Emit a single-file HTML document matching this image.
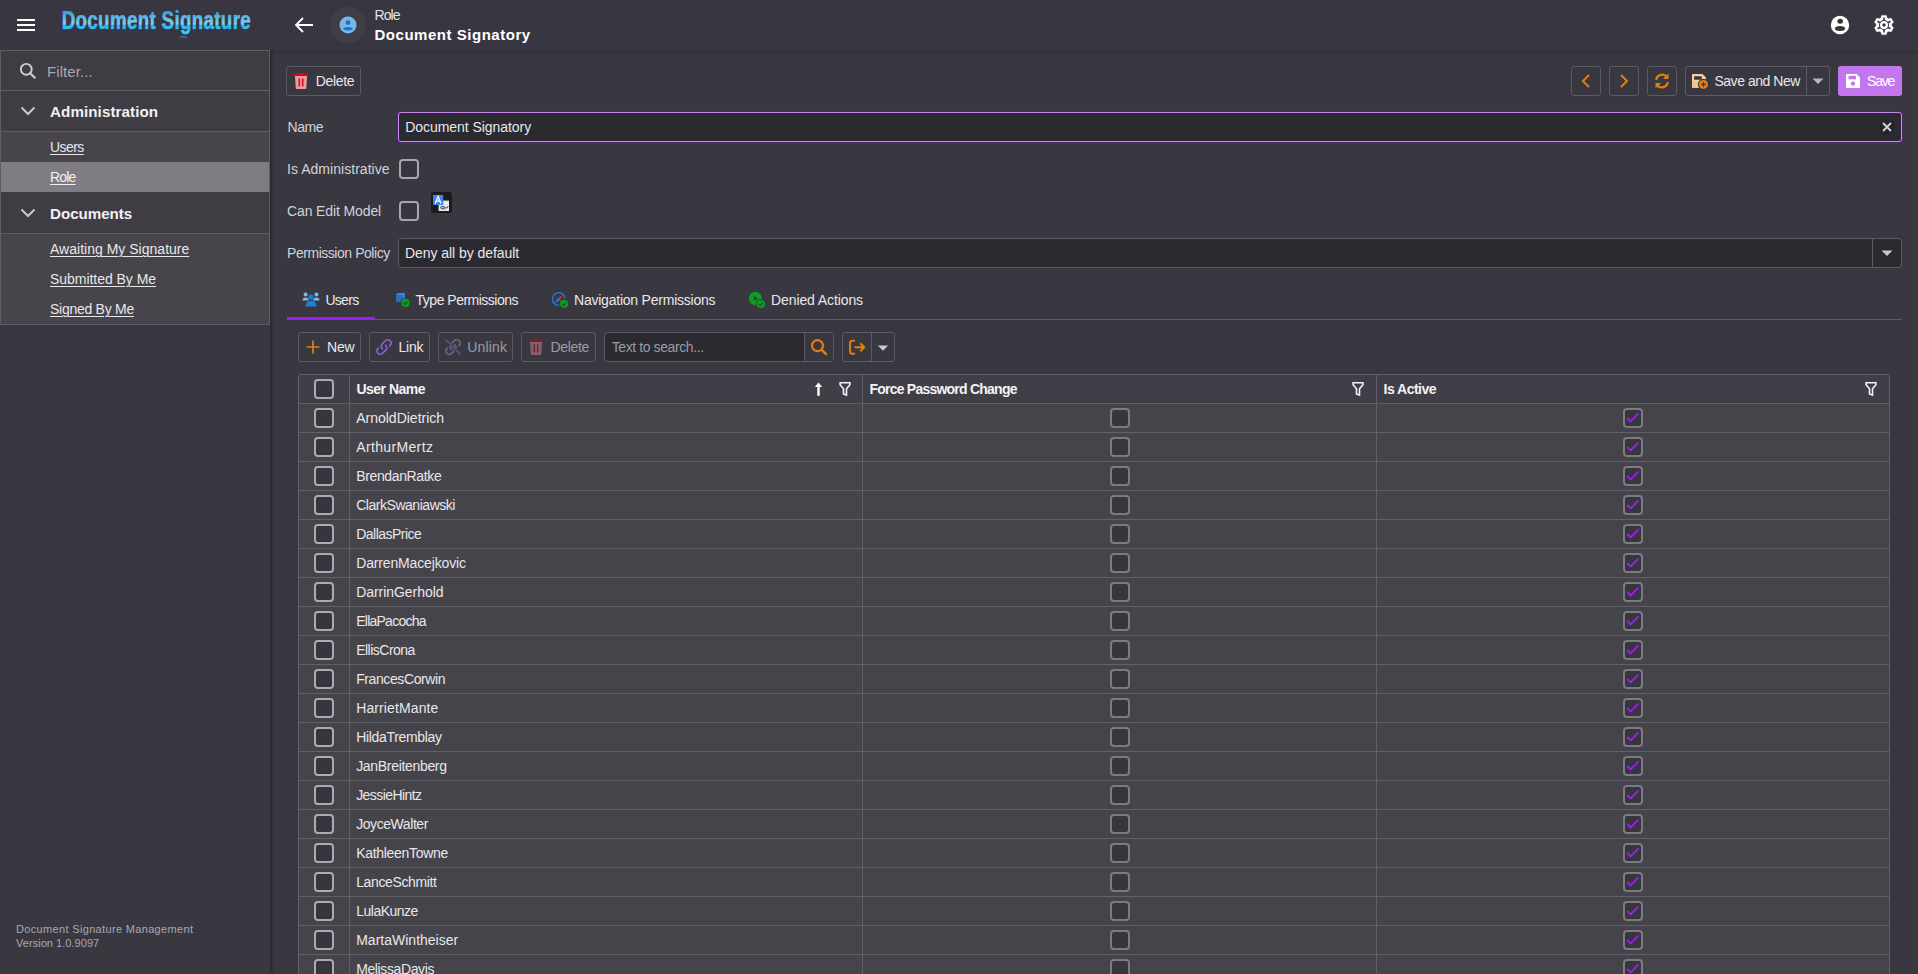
<!DOCTYPE html>
<html><head><meta charset="utf-8"><style>
*{box-sizing:border-box;margin:0;padding:0}
html,body{width:1918px;height:974px;overflow:hidden}
body{background:#393841;font-family:"Liberation Sans",sans-serif;color:#e8e7ea;font-size:14px;position:relative}
.a{position:absolute}
.t{position:absolute;white-space:nowrap;line-height:1}
.u{text-decoration:underline;text-underline-offset:1.5px;text-decoration-thickness:1px}
</style></head><body>
<div class="a" style="left:0px;top:50px;width:270px;height:924px;background:#393841;box-shadow:2px 0 3px rgba(0,0,0,.3)"></div>
<div class="a" style="left:0px;top:0px;width:1918px;height:50px;background:#383741;"></div>
<div class="a" style="left:270px;top:50px;width:1648px;height:4px;background:linear-gradient(rgba(20,20,20,.16),rgba(20,20,20,.10) 60%,rgba(20,20,20,0));"></div>
<div class="a" style="left:17px;top:19px;width:18px;height:2px;background:#ffffff;"></div>
<div class="a" style="left:17px;top:24px;width:18px;height:2px;background:#ffffff;"></div>
<div class="a" style="left:17px;top:29px;width:18px;height:2px;background:#ffffff;"></div>
<svg class="a" style="left:55px;top:0px" width="210" height="45" viewBox="0 0 210 45"><defs><linearGradient id="lg" x1="0" y1="10" x2="0" y2="34" gradientUnits="userSpaceOnUse"><stop offset="0" stop-color="#3499cc"/><stop offset="0.25" stop-color="#55b2dc"/><stop offset="0.6" stop-color="#8ad2ee"/><stop offset="0.61" stop-color="#2ab4ee"/><stop offset="1" stop-color="#3ccaff"/></linearGradient><linearGradient id="rg" x1="0" y1="35" x2="0" y2="39.5" gradientUnits="userSpaceOnUse"><stop offset="0" stop-color="#4f8aa6"/><stop offset="1" stop-color="#37363f"/></linearGradient></defs><g transform="translate(6.7 0) scale(0.72 1)"><text x="0" y="29.1" font-family="Liberation Sans" font-weight="700" font-size="26" textLength="262.5" lengthAdjust="spacing" fill="none" stroke="#231c24" stroke-opacity="0.55" stroke-width="2.2" stroke-linejoin="round">Document Signature</text><text x="0" y="29.1" font-family="Liberation Sans" font-weight="700" font-size="26" textLength="262.5" lengthAdjust="spacing" fill="url(#lg)" stroke="url(#lg)" stroke-width="0.7" stroke-linejoin="round">Document Signature</text></g><path d="M123.8 39.2 C124.4 34.6 132.6 34.6 133.2 39.2 L130.6 39.2 C130 37.2 127 37.2 126.4 39.2 Z" fill="url(#rg)"/></svg>
<svg class="a" style="left:294px;top:16px" width="20" height="18" viewBox="0 0 20 18"><path d="M2 9 H19 M9 2 L2 9 L9 16" stroke="#fff" stroke-width="1.8" fill="none" stroke-linejoin="miter"/></svg>
<div class="a" style="left:330px;top:7px;width:36px;height:36px;background:#403f48;border-radius:50%"></div>
<svg class="a" style="left:339px;top:16px" width="18" height="18" viewBox="0 0 18 18"><circle cx="9" cy="9" r="8.5" fill="#7ab6e6"/><circle cx="9" cy="6.6" r="2.4" fill="#1a73d0"/><path d="M4.2 12.2 Q9 9.6 13.8 12.2 Q13.8 14.4 9 14.4 Q4.2 14.4 4.2 12.2Z" fill="#1a73d0"/></svg>
<div class="t" style="left:374.5px;top:8.15px;font-size:14px;color:#e6e5e8;letter-spacing:-0.899px;">Role</div>
<div class="t" style="left:374.5px;top:27.30px;font-size:15px;color:#ffffff;font-weight:700;letter-spacing:0.524px;">Document Signatory</div>
<svg class="a" style="left:1830px;top:15px" width="20" height="20" viewBox="0 0 20 20"><circle cx="10" cy="10" r="9.2" fill="#fff"/><ellipse cx="10.2" cy="6.3" rx="2.8" ry="2.5" fill="#36353e"/><ellipse cx="10" cy="13.6" rx="5.1" ry="2.5" fill="#36353e"/></svg>
<svg class="a" style="left:1872px;top:13px" width="24" height="24" viewBox="0 0 24 24"><g transform="translate(12 12)"><path fill="#fff" stroke="#fff" stroke-width="0.4" stroke-linejoin="round" d="M-3.85 -6.67 L-2.92 -7.23 L-2.40 -9.61 L2.40 -9.61 L2.92 -7.23 L3.85 -6.67 L4.80 -6.15 L7.12 -6.88 L9.52 -2.73 L7.72 -1.09 L7.70 0.00 L7.72 1.09 L9.52 2.73 L7.12 6.88 L4.80 6.15 L3.85 6.67 L2.92 7.23 L2.40 9.61 L-2.40 9.61 L-2.92 7.23 L-3.85 6.67 L-4.80 6.15 L-7.12 6.88 L-9.52 2.73 L-7.72 1.09 L-7.70 -0.00 L-7.72 -1.09 L-9.52 -2.73 L-7.12 -6.88 L-4.80 -6.15Z"/><circle r="5.0" fill="#36353e"/><circle r="2.85" fill="none" stroke="#fff" stroke-width="2.3"/><g stroke="#36353e" stroke-width="1.6"><line x1="0.00" y1="-4.60" x2="0.00" y2="-7.50"/><line x1="3.98" y1="-2.30" x2="6.50" y2="-3.75"/><line x1="3.98" y1="2.30" x2="6.50" y2="3.75"/><line x1="0.00" y1="4.60" x2="0.00" y2="7.50"/><line x1="-3.98" y1="2.30" x2="-6.50" y2="3.75"/><line x1="-3.98" y1="-2.30" x2="-6.50" y2="-3.75"/></g></g></svg>
<div class="a" style="left:0px;top:50px;width:270px;height:275px;background:#3f3c44;border:1px solid #5f5d65"></div>
<div class="a" style="left:1px;top:91px;width:268px;height:40px;background:#3f3c44;"></div>
<div class="a" style="left:1px;top:131px;width:268px;height:1px;background:#5f5d65;"></div>
<div class="a" style="left:1px;top:90px;width:268px;height:1px;background:#5f5d65;"></div>
<div class="a" style="left:1px;top:132px;width:268px;height:30px;background:#47444b;"></div>
<div class="a" style="left:1px;top:162px;width:268px;height:30px;background:#7f7d83;"></div>
<div class="a" style="left:1px;top:192px;width:268px;height:41px;background:#3f3c44;"></div>
<div class="a" style="left:1px;top:233px;width:268px;height:1px;background:#5f5d65;"></div>
<div class="a" style="left:1px;top:234px;width:268px;height:90px;background:#47444b;"></div>
<svg class="a" style="left:19px;top:62px" width="18" height="18" viewBox="0 0 18 18"><circle cx="7.3" cy="7.3" r="5.4" stroke="#cfced2" stroke-width="1.9" fill="none"/><path d="M11.2 11.2 L15.8 15.8" stroke="#cfced2" stroke-width="2.1" stroke-linecap="round"/></svg>
<div class="t" style="left:47px;top:64.30px;font-size:15px;color:#a9a8ad;letter-spacing:0.073px;">Filter...</div>
<svg class="a" style="left:20px;top:106px" width="16" height="10" viewBox="0 0 16 10"><path d="M1.5 1.5 L8 8 L14.5 1.5" stroke="#c9c8cc" stroke-width="2" fill="none"/></svg>
<svg class="a" style="left:20px;top:208px" width="16" height="10" viewBox="0 0 16 10"><path d="M1.5 1.5 L8 8 L14.5 1.5" stroke="#c9c8cc" stroke-width="2" fill="none"/></svg>
<div class="t" style="left:50px;top:103.63px;font-size:15.2px;color:#f2f1f4;font-weight:700;letter-spacing:0.071px;">Administration</div>
<div class="t" style="left:50px;top:205.93px;font-size:15.2px;color:#f2f1f4;font-weight:700;letter-spacing:-0.05px;">Documents</div>
<div class="t" style="left:50px;top:140.45px;font-size:14px;color:#e8e7ea;letter-spacing:-0.566px;"><span class="u">Users</span></div>
<div class="t" style="left:50px;top:170.05px;font-size:14px;color:#f2f1f4;letter-spacing:-0.799px;"><span class="u">Role</span></div>
<div class="t" style="left:50px;top:242.15px;font-size:14px;color:#e8e7ea;letter-spacing:0.013px;"><span class="u">Awaiting My Signature</span></div>
<div class="t" style="left:50px;top:272.15px;font-size:14px;color:#e8e7ea;letter-spacing:-0.036px;"><span class="u">Submitted By Me</span></div>
<div class="t" style="left:50px;top:302.15px;font-size:14px;color:#e8e7ea;letter-spacing:-0.27px;"><span class="u">Signed By Me</span></div>
<div class="t" style="left:16px;top:923.69px;font-size:11px;color:#a9a8ad;letter-spacing:0.338px;">Document Signature Management</div>
<div class="t" style="left:16px;top:937.69px;font-size:11px;color:#a9a8ad;letter-spacing:0.041px;">Version 1.0.9097</div>
<div class="a" style="left:286px;top:66px;width:75px;height:30px;background:none;border:1px solid #5c5a62;border-radius:3px;"></div>
<svg class="a" style="left:288px;top:68px" width="24" height="24" viewBox="0 0 24 24"><rect x="5.9" y="5.8" width="14.1" height="2.1" fill="#d90a1a"/><rect x="10.1" y="4.9" width="5.9" height="1.5" rx="0.6" fill="#d90a1a"/><path d="M7 7.9 H19.1 L18.3 20.2 Q18.2 20.9 17.5 20.9 H8.6 Q7.9 20.9 7.8 20.2 Z" fill="#eb9aa2"/><path d="M11.3 11 V17.7 M14.7 11 V17.7" stroke="#d01020" stroke-width="1.6" stroke-linecap="round"/></svg>
<div class="t" style="left:315.7px;top:74.15px;font-size:14px;color:#e8e7ea;letter-spacing:-0.314px;">Delete</div>
<div class="a" style="left:1571px;top:66px;width:30px;height:30px;background:none;border:1px solid #5c5a62;border-radius:3px;"></div>
<svg class="a" style="left:1579px;top:73px" width="14" height="16" viewBox="0 0 14 16"><path d="M10 2 L4 8 L10 14" stroke="#df7f0e" stroke-width="2" fill="none"/></svg>
<div class="a" style="left:1609px;top:66px;width:30px;height:30px;background:none;border:1px solid #5c5a62;border-radius:3px;"></div>
<svg class="a" style="left:1617px;top:73px" width="14" height="16" viewBox="0 0 14 16"><path d="M4 2 L10 8 L4 14" stroke="#df7f0e" stroke-width="2" fill="none"/></svg>
<div class="a" style="left:1647px;top:66px;width:30px;height:30px;background:none;border:1px solid #5c5a62;border-radius:3px;"></div>
<svg class="a" style="left:1653px;top:72px" width="18" height="18" viewBox="0 0 18 18"><g fill="none" stroke="#df7f0e" stroke-width="2.2"><path d="M3.2 8 A6 6 0 0 1 14 5.2"/><path d="M14.8 10 A6 6 0 0 1 4 12.8"/></g><path d="M15.5 1.5 V7 H10 Z" fill="#df7f0e"/><path d="M2.5 16.5 V11 H8 Z" fill="#df7f0e"/></svg>
<div class="a" style="left:1685px;top:66px;width:145px;height:30px;background:none;border:1px solid #5c5a62;border-radius:3px;"></div>
<div class="a" style="left:1806px;top:67px;width:1px;height:28px;background:#5c5a62;"></div>
<svg class="a" style="left:1686px;top:68px" width="30" height="26" viewBox="0 0 30 26"><path d="M6 7 Q6 6 7 6 H16.5 L20 9.5 V19 Q20 20 19 20 H7 Q6 20 6 19 Z" fill="#fcd09a"/><path d="M6 13 H20 V19 Q20 20 19 20 H7 Q6 20 6 19 Z" fill="#f0c48c"/><rect x="8.1" y="8.3" width="7.6" height="3.4" fill="#37363f"/><circle cx="17.5" cy="16.4" r="5.6" fill="#37363f"/><circle cx="17.5" cy="16.4" r="4.5" fill="#e8820f"/><path d="M15 16.4 H20 M17.5 13.9 V18.9" stroke="#37363f" stroke-width="1.2"/></svg>
<div class="t" style="left:1714.4px;top:74.15px;font-size:14px;color:#e8e7ea;letter-spacing:-0.46px;">Save and New</div>
<svg class="a" style="left:1812px;top:78px" width="12" height="7" viewBox="0 0 12 7"><path d="M0.5 0.5 H11.5 L6 6 Z" fill="#b9b8bd"/></svg>
<div class="a" style="left:1838px;top:66px;width:64px;height:30px;background:#c377ee;border-radius:3px"></div>
<svg class="a" style="left:1845px;top:73px" width="16" height="16" viewBox="0 0 16 16"><path d="M1 2 Q1 1 2 1 H11.5 L15 4.5 V14 Q15 15 14 15 H2 Q1 15 1 14 Z" fill="#fff"/><rect x="3.5" y="2.8" width="7.5" height="3.5" fill="#c377ee"/><circle cx="8" cy="10.6" r="2.2" fill="#c377ee"/></svg>
<div class="t" style="left:1867px;top:74.05px;font-size:14px;color:#ffffff;letter-spacing:-1.207px;">Save</div>
<div class="t" style="left:287.5px;top:120.45px;font-size:14px;color:#d2d1d6;letter-spacing:-0.453px;">Name</div>
<div class="a" style="left:398px;top:112px;width:1504px;height:30px;background:#2b2a31;border:1.6px solid #cd88f0;border-radius:3px;box-shadow:0 0.4px 0 1.4px #4d2a69"></div>
<div class="t" style="left:405.3px;top:120.45px;font-size:14px;color:#e8e7ea;letter-spacing:-0.056px;">Document Signatory</div>
<div class="a" style="left:1879px;top:119px;width:16px;height:16px;background:#25242a;border-radius:50%"></div>
<svg class="a" style="left:1882px;top:122px" width="10" height="10" viewBox="0 0 10 10"><path d="M1 1 L9 9 M9 1 L1 9" stroke="#d4d3d7" stroke-width="1.8"/></svg>
<div class="t" style="left:287px;top:162.15px;font-size:14px;color:#d2d1d6;letter-spacing:0.041px;">Is Administrative</div>
<div class="a" style="left:399px;top:159px;width:20px;height:20px;background:#37353e;border:2px solid #a9a7ad;border-radius:4px"></div>
<div class="t" style="left:287px;top:204.15px;font-size:14px;color:#d2d1d6;letter-spacing:-0.117px;">Can Edit Model</div>
<div class="a" style="left:399px;top:201px;width:20px;height:20px;background:#37353e;border:2px solid #a9a7ad;border-radius:4px"></div>
<div class="a" style="left:430.5px;top:192.3px;width:21px;height:21px;background:#1b1b1d;border-radius:3px"></div>
<svg class="a" style="left:430px;top:192px" width="22" height="22" viewBox="0 0 22 22"><rect x="8.6" y="8.6" width="10.4" height="10.4" fill="#e6eaea"/><path d="M10.3 15.8 q2 -2.6 4 -0.6 q2 2 4 -1.2 M11 17.2 q1.8 -1.6 3.6 0.2" stroke="#3f6874" stroke-width="1.1" fill="none"/><rect x="3" y="2.9" width="10.2" height="10.1" fill="#3f82f2"/><path d="M5.2 11.6 L8.1 4.4 L11 11.6 M6.3 9.2 H9.9" stroke="#fff" stroke-width="1.3" fill="none"/></svg>
<div class="t" style="left:287px;top:245.95px;font-size:14px;color:#d2d1d6;letter-spacing:-0.455px;">Permission Policy</div>
<div class="a" style="left:398px;top:238px;width:1504px;height:30px;background:#2b2a31;border:1px solid #5c5a62;border-radius:4px"></div>
<div class="a" style="left:1872px;top:239px;width:1px;height:28px;background:#5c5a62;"></div>
<svg class="a" style="left:1881px;top:250px" width="12" height="7" viewBox="0 0 12 7"><path d="M0.5 0.5 H11.5 L6 6 Z" fill="#c9c8cc"/></svg>
<div class="t" style="left:405px;top:245.75px;font-size:14px;color:#e8e7ea;letter-spacing:-0.055px;">Deny all by default</div>
<div class="a" style="left:287px;top:319px;width:1615px;height:1px;background:#5f5d65;"></div>
<div class="a" style="left:287px;top:317px;width:88px;height:3px;background:#a21cf0;"></div>
<svg class="a" style="left:302px;top:292px" width="18" height="15" viewBox="0 0 18 15"><circle cx="3.6" cy="2.6" r="2" fill="#7fb8ea"/><circle cx="14.4" cy="2.6" r="2" fill="#7fb8ea"/><path d="M0.5 8.5 Q0.5 5.6 3.6 5.6 Q6.7 5.6 6.7 8.5 Z M11.3 8.5 Q11.3 5.6 14.4 5.6 Q17.5 5.6 17.5 8.5 Z" fill="#7fb8ea"/><circle cx="9" cy="5" r="2.6" fill="#1a80d8"/><path d="M3.5 14.5 Q3.5 8.8 9 8.8 Q14.5 8.8 14.5 14.5 Z" fill="#1a80d8"/></svg>
<div class="t" style="left:325.4px;top:293.25px;font-size:14px;color:#e8e7ea;letter-spacing:-0.691px;">Users</div>
<svg class="a" style="left:394.5px;top:292px" width="16" height="16" viewBox="0 0 16 16"><path d="M1 3 L3 1 H10 V8 L8 10 H1 Z" fill="#2a6cc8"/><path d="M3 1 H10 L8 3 H1 Z" fill="#3f86e0"/><path d="M10 1 V8 L8 10 V3 Z" fill="#1a8cf0"/><circle cx="10.5" cy="10.9" r="5" fill="#393841"/><circle cx="10.5" cy="10.9" r="4.1" fill="#07a020"/><path d="M8.6 11 L10 12.4 L12.6 9.6" stroke="#22452a" stroke-width="1.2" fill="none"/></svg>
<div class="t" style="left:415.6px;top:293.25px;font-size:14px;color:#e8e7ea;letter-spacing:-0.506px;">Type Permissions</div>
<svg class="a" style="left:551px;top:292px" width="17" height="17" viewBox="0 0 17 17"><circle cx="7.7" cy="7" r="6.3" fill="none" stroke="#1a80e0" stroke-width="1.3"/><path d="M12.1 2.9 L9.02 8.14 L6.78 5.86 Z" fill="#e82020"/><path d="M3.6 11.1 L9.02 8.14 L6.78 5.86 Z" fill="#1a80e0"/><circle cx="13.1" cy="11.8" r="5" fill="#393841"/><circle cx="13.1" cy="11.8" r="4.1" fill="#07a020"/><path d="M11.2 12 L12.6 13.4 L15.2 10.6" stroke="#22452a" stroke-width="1.2" fill="none"/></svg>
<div class="t" style="left:574px;top:293.25px;font-size:14px;color:#e8e7ea;letter-spacing:-0.224px;">Navigation Permissions</div>
<svg class="a" style="left:745px;top:288px" width="24" height="24" viewBox="0 0 24 24"><circle cx="10.4" cy="10.4" r="6.55" fill="#07a020"/><path d="M9 8.1 L12.9 10.4 L9 12.6 Z" fill="#37353e"/><circle cx="16" cy="16" r="5" fill="#393841"/><circle cx="16" cy="16" r="4.1" fill="#07a020"/><path d="M14.1 16.1 L15.5 17.5 L18.1 14.6" stroke="#22452a" stroke-width="1.2" fill="none"/></svg>
<div class="t" style="left:771px;top:293.25px;font-size:14px;color:#e8e7ea;letter-spacing:-0.1px;">Denied Actions</div>
<div class="a" style="left:298px;top:332px;width:63px;height:30px;background:none;border:1px solid #5c5a62;border-radius:3px;"></div>
<svg class="a" style="left:306px;top:340px" width="14" height="14" viewBox="0 0 14 14"><path d="M7 0.5 V13.5 M0.5 7 H13.5" stroke="#df7f0e" stroke-width="1.7"/></svg>
<div class="t" style="left:327px;top:340.15px;font-size:14px;color:#e8e7ea;letter-spacing:-0.208px;">New</div>
<div class="a" style="left:369px;top:332px;width:61px;height:30px;background:none;border:1px solid #5c5a62;border-radius:3px;"></div>
<svg class="a" style="left:372px;top:335px" width="24" height="24" viewBox="0 0 24 24"><g fill="none" stroke="#8a5fcf" stroke-width="1.7" stroke-linecap="round"><path d="M10.23 13.67 A3.35 3.35 0 0 1 10.23 8.93 L13.43 5.73 A3.35 3.35 0 0 1 18.17 10.47 L17.67 10.97"/><path d="M13.77 10.33 A3.35 3.35 0 0 1 13.77 15.07 L10.57 18.27 A3.35 3.35 0 0 1 5.83 13.53 L6.33 13.03"/></g></svg>
<div class="t" style="left:398.5px;top:340.15px;font-size:14px;color:#e8e7ea;letter-spacing:-0.196px;">Link</div>
<div class="a" style="left:438px;top:332px;width:75px;height:30px;background:none;border:1px solid #5c5a62;border-radius:3px;"></div>
<svg class="a" style="left:441px;top:335px" width="24" height="24" viewBox="0 0 24 24"><g fill="none" stroke="#706481" stroke-width="1.7" stroke-linecap="round"><path d="M11.3 7.8 L13.43 5.73 A3.35 3.35 0 0 1 18.17 10.47 L17.67 10.97"/><path d="M13.5 9.6 L15.2 12.2"/><path d="M12.7 16.2 L10.57 18.27 A3.35 3.35 0 0 1 5.83 13.53 L6.33 13.03"/><path d="M8.8 11.8 L10.5 14.4"/></g><path d="M5 4.8 L19.2 19" stroke="#5c4a88" stroke-width="1.8" stroke-linecap="round"/></svg>
<div class="t" style="left:467.3px;top:340.15px;font-size:14px;color:#9c9ba1;letter-spacing:0.139px;">Unlink</div>
<div class="a" style="left:521px;top:332px;width:75px;height:30px;background:none;border:1px solid #5c5a62;border-radius:3px;"></div>
<svg class="a" style="left:523px;top:334px" width="24" height="24" viewBox="0 0 24 24"><rect x="5.9" y="5.8" width="14.1" height="2.1" fill="#7a2232"/><rect x="10.1" y="4.9" width="5.9" height="1.5" rx="0.6" fill="#7a2232"/><path d="M7 7.9 H19.1 L18.3 20.2 Q18.2 20.9 17.5 20.9 H8.6 Q7.9 20.9 7.8 20.2 Z" fill="#85606a"/><path d="M11.3 11 V17.7 M14.7 11 V17.7" stroke="#7a2232" stroke-width="1.6" stroke-linecap="round"/></svg>
<div class="t" style="left:550.4px;top:340.15px;font-size:14px;color:#9c9ba1;letter-spacing:-0.294px;">Delete</div>
<div class="a" style="left:604px;top:332px;width:230px;height:30px;background:#2b2a31;border:1px solid #5c5a62;border-radius:4px"></div>
<div class="a" style="left:804px;top:333px;width:29px;height:28px;background:#393841;border-left:1px solid #5c5a62;border-radius:0 3px 3px 0"></div>
<svg class="a" style="left:810px;top:339px" width="18" height="18" viewBox="0 0 18 18"><circle cx="7.5" cy="6.6" r="5.5" fill="none" stroke="#df7f0e" stroke-width="2.2"/><path d="M11.6 10.7 L16 15.2" stroke="#df7f0e" stroke-width="2.4" stroke-linecap="round"/></svg>
<div class="t" style="left:611.7px;top:340.15px;font-size:14px;color:#9c9ba1;letter-spacing:-0.402px;">Text to search...</div>
<div class="a" style="left:842px;top:332px;width:53px;height:30px;background:none;border:1px solid #5c5a62;border-radius:3px;"></div>
<div class="a" style="left:871px;top:333px;width:1px;height:28px;background:#5c5a62;"></div>
<svg class="a" style="left:840px;top:330px" width="30" height="30" viewBox="0 0 30 30"><path d="M15 10.8 H12.6 Q10.1 10.8 10.1 13.2 V21.4 Q10.1 23.8 12.6 23.8 H15" stroke="#df7f0e" stroke-width="2" fill="none"/><path d="M14.5 17.2 H24.2 M20.3 13.2 L24.2 17.2 L20.3 21.2" stroke="#df7f0e" stroke-width="2" fill="none"/></svg>
<svg class="a" style="left:877px;top:345px" width="12" height="7" viewBox="0 0 12 7"><path d="M0.8 0.5 H11.2 L6 5.8 Z" fill="#c9c8cc"/></svg>
<div class="a" style="left:298px;top:374px;width:1592px;height:600px;background:#46444b;border:1px solid #615f67;border-bottom:none;border-radius:3px 3px 0 0"></div>
<div class="a" style="left:299px;top:375px;width:1590px;height:28px;background:#403e46;"></div>
<div class="a" style="left:349px;top:375px;width:1px;height:599px;background:#615f67;"></div>
<div class="a" style="left:862px;top:375px;width:1px;height:599px;background:#615f67;"></div>
<div class="a" style="left:1376px;top:375px;width:1px;height:599px;background:#615f67;"></div>
<div class="a" style="left:314px;top:379px;width:20px;height:20px;background:#37353e;border:2px solid #adabb1;border-radius:4px"></div>
<div class="t" style="left:356.4px;top:382.15px;font-size:14px;color:#f4f3f6;font-weight:700;letter-spacing:-0.507px;">User Name</div>
<div class="t" style="left:869.4px;top:382.15px;font-size:14px;color:#f4f3f6;font-weight:700;letter-spacing:-0.765px;">Force Password Change</div>
<div class="t" style="left:1383.5px;top:382.15px;font-size:14px;color:#f4f3f6;font-weight:700;letter-spacing:-0.497px;">Is Active</div>
<svg class="a" style="left:838px;top:381px" width="14" height="16" viewBox="0 0 14 16"><path d="M2.1 1.7 H11.9 V3.8 L8.5 7.8 V14.0 L5.5 12.9 V7.8 L2.1 3.8 Z" stroke="#f2f1f4" stroke-width="1.6" fill="none" stroke-linejoin="miter"/></svg>
<svg class="a" style="left:1351px;top:381px" width="14" height="16" viewBox="0 0 14 16"><path d="M2.1 1.7 H11.9 V3.8 L8.5 7.8 V14.0 L5.5 12.9 V7.8 L2.1 3.8 Z" stroke="#f2f1f4" stroke-width="1.6" fill="none" stroke-linejoin="miter"/></svg>
<svg class="a" style="left:1864px;top:381px" width="14" height="16" viewBox="0 0 14 16"><path d="M2.1 1.7 H11.9 V3.8 L8.5 7.8 V14.0 L5.5 12.9 V7.8 L2.1 3.8 Z" stroke="#f2f1f4" stroke-width="1.6" fill="none" stroke-linejoin="miter"/></svg>
<svg class="a" style="left:806px;top:376px" width="24" height="24" viewBox="0 0 24 24"><path d="M8.8 11 L12.5 6.4 L16.2 11 Z" fill="#fff"/><rect x="11.3" y="10.5" width="2.4" height="9.3" fill="#fff"/></svg>
<div class="a" style="left:299px;top:403px;width:1590px;height:1px;background:#615f67;"></div>
<div class="a" style="left:314px;top:408px;width:20px;height:20px;background:#37353e;border:2px solid #adabb1;border-radius:4px"></div>
<div class="t" style="left:356.2px;top:411.15px;font-size:14px;color:#e8e7ea;letter-spacing:-0.003px;">ArnoldDietrich</div>
<div class="a" style="left:1110px;top:408px;width:20px;height:20px;background:#37353e;border:2px solid #7d7b82;border-radius:4px"></div>
<div class="a" style="left:1623px;top:408px;width:20px;height:20px;background:#37353e;border:2px solid #7d7b82;border-radius:4px"></div>
<svg class="a" style="left:1623px;top:408px" width="20" height="20" viewBox="0 0 20 20"><path d="M4.2 10 L7.6 13.4 L15.6 5.4" stroke="#a21cf0" stroke-width="1.8" fill="none"/></svg>
<div class="a" style="left:299px;top:432px;width:1590px;height:1px;background:#615f67;"></div>
<div class="a" style="left:314px;top:437px;width:20px;height:20px;background:#37353e;border:2px solid #adabb1;border-radius:4px"></div>
<div class="t" style="left:356.2px;top:440.15px;font-size:14px;color:#e8e7ea;letter-spacing:0.357px;">ArthurMertz</div>
<div class="a" style="left:1110px;top:437px;width:20px;height:20px;background:#37353e;border:2px solid #7d7b82;border-radius:4px"></div>
<div class="a" style="left:1623px;top:437px;width:20px;height:20px;background:#37353e;border:2px solid #7d7b82;border-radius:4px"></div>
<svg class="a" style="left:1623px;top:437px" width="20" height="20" viewBox="0 0 20 20"><path d="M4.2 10 L7.6 13.4 L15.6 5.4" stroke="#a21cf0" stroke-width="1.8" fill="none"/></svg>
<div class="a" style="left:299px;top:461px;width:1590px;height:1px;background:#615f67;"></div>
<div class="a" style="left:314px;top:466px;width:20px;height:20px;background:#37353e;border:2px solid #adabb1;border-radius:4px"></div>
<div class="t" style="left:356.2px;top:469.15px;font-size:14px;color:#e8e7ea;letter-spacing:-0.365px;">BrendanRatke</div>
<div class="a" style="left:1110px;top:466px;width:20px;height:20px;background:#37353e;border:2px solid #7d7b82;border-radius:4px"></div>
<div class="a" style="left:1623px;top:466px;width:20px;height:20px;background:#37353e;border:2px solid #7d7b82;border-radius:4px"></div>
<svg class="a" style="left:1623px;top:466px" width="20" height="20" viewBox="0 0 20 20"><path d="M4.2 10 L7.6 13.4 L15.6 5.4" stroke="#a21cf0" stroke-width="1.8" fill="none"/></svg>
<div class="a" style="left:299px;top:490px;width:1590px;height:1px;background:#615f67;"></div>
<div class="a" style="left:314px;top:495px;width:20px;height:20px;background:#37353e;border:2px solid #adabb1;border-radius:4px"></div>
<div class="t" style="left:356.2px;top:498.15px;font-size:14px;color:#e8e7ea;letter-spacing:-0.465px;">ClarkSwaniawski</div>
<div class="a" style="left:1110px;top:495px;width:20px;height:20px;background:#37353e;border:2px solid #7d7b82;border-radius:4px"></div>
<div class="a" style="left:1623px;top:495px;width:20px;height:20px;background:#37353e;border:2px solid #7d7b82;border-radius:4px"></div>
<svg class="a" style="left:1623px;top:495px" width="20" height="20" viewBox="0 0 20 20"><path d="M4.2 10 L7.6 13.4 L15.6 5.4" stroke="#a21cf0" stroke-width="1.8" fill="none"/></svg>
<div class="a" style="left:299px;top:519px;width:1590px;height:1px;background:#615f67;"></div>
<div class="a" style="left:314px;top:524px;width:20px;height:20px;background:#37353e;border:2px solid #adabb1;border-radius:4px"></div>
<div class="t" style="left:356.2px;top:527.15px;font-size:14px;color:#e8e7ea;letter-spacing:-0.521px;">DallasPrice</div>
<div class="a" style="left:1110px;top:524px;width:20px;height:20px;background:#37353e;border:2px solid #7d7b82;border-radius:4px"></div>
<div class="a" style="left:1623px;top:524px;width:20px;height:20px;background:#37353e;border:2px solid #7d7b82;border-radius:4px"></div>
<svg class="a" style="left:1623px;top:524px" width="20" height="20" viewBox="0 0 20 20"><path d="M4.2 10 L7.6 13.4 L15.6 5.4" stroke="#a21cf0" stroke-width="1.8" fill="none"/></svg>
<div class="a" style="left:299px;top:548px;width:1590px;height:1px;background:#615f67;"></div>
<div class="a" style="left:314px;top:553px;width:20px;height:20px;background:#37353e;border:2px solid #adabb1;border-radius:4px"></div>
<div class="t" style="left:356.2px;top:556.15px;font-size:14px;color:#e8e7ea;letter-spacing:-0.15px;">DarrenMacejkovic</div>
<div class="a" style="left:1110px;top:553px;width:20px;height:20px;background:#37353e;border:2px solid #7d7b82;border-radius:4px"></div>
<div class="a" style="left:1623px;top:553px;width:20px;height:20px;background:#37353e;border:2px solid #7d7b82;border-radius:4px"></div>
<svg class="a" style="left:1623px;top:553px" width="20" height="20" viewBox="0 0 20 20"><path d="M4.2 10 L7.6 13.4 L15.6 5.4" stroke="#a21cf0" stroke-width="1.8" fill="none"/></svg>
<div class="a" style="left:299px;top:577px;width:1590px;height:1px;background:#615f67;"></div>
<div class="a" style="left:314px;top:582px;width:20px;height:20px;background:#37353e;border:2px solid #adabb1;border-radius:4px"></div>
<div class="t" style="left:356.2px;top:585.15px;font-size:14px;color:#e8e7ea;letter-spacing:-0.053px;">DarrinGerhold</div>
<div class="a" style="left:1110px;top:582px;width:20px;height:20px;background:#37353e;border:2px solid #7d7b82;border-radius:4px"></div>
<div class="a" style="left:1623px;top:582px;width:20px;height:20px;background:#37353e;border:2px solid #7d7b82;border-radius:4px"></div>
<svg class="a" style="left:1623px;top:582px" width="20" height="20" viewBox="0 0 20 20"><path d="M4.2 10 L7.6 13.4 L15.6 5.4" stroke="#a21cf0" stroke-width="1.8" fill="none"/></svg>
<div class="a" style="left:299px;top:606px;width:1590px;height:1px;background:#615f67;"></div>
<div class="a" style="left:314px;top:611px;width:20px;height:20px;background:#37353e;border:2px solid #adabb1;border-radius:4px"></div>
<div class="t" style="left:356.2px;top:614.15px;font-size:14px;color:#e8e7ea;letter-spacing:-0.753px;">EllaPacocha</div>
<div class="a" style="left:1110px;top:611px;width:20px;height:20px;background:#37353e;border:2px solid #7d7b82;border-radius:4px"></div>
<div class="a" style="left:1623px;top:611px;width:20px;height:20px;background:#37353e;border:2px solid #7d7b82;border-radius:4px"></div>
<svg class="a" style="left:1623px;top:611px" width="20" height="20" viewBox="0 0 20 20"><path d="M4.2 10 L7.6 13.4 L15.6 5.4" stroke="#a21cf0" stroke-width="1.8" fill="none"/></svg>
<div class="a" style="left:299px;top:635px;width:1590px;height:1px;background:#615f67;"></div>
<div class="a" style="left:314px;top:640px;width:20px;height:20px;background:#37353e;border:2px solid #adabb1;border-radius:4px"></div>
<div class="t" style="left:356.2px;top:643.15px;font-size:14px;color:#e8e7ea;letter-spacing:-0.512px;">EllisCrona</div>
<div class="a" style="left:1110px;top:640px;width:20px;height:20px;background:#37353e;border:2px solid #7d7b82;border-radius:4px"></div>
<div class="a" style="left:1623px;top:640px;width:20px;height:20px;background:#37353e;border:2px solid #7d7b82;border-radius:4px"></div>
<svg class="a" style="left:1623px;top:640px" width="20" height="20" viewBox="0 0 20 20"><path d="M4.2 10 L7.6 13.4 L15.6 5.4" stroke="#a21cf0" stroke-width="1.8" fill="none"/></svg>
<div class="a" style="left:299px;top:664px;width:1590px;height:1px;background:#615f67;"></div>
<div class="a" style="left:314px;top:669px;width:20px;height:20px;background:#37353e;border:2px solid #adabb1;border-radius:4px"></div>
<div class="t" style="left:356.2px;top:672.15px;font-size:14px;color:#e8e7ea;letter-spacing:-0.403px;">FrancesCorwin</div>
<div class="a" style="left:1110px;top:669px;width:20px;height:20px;background:#37353e;border:2px solid #7d7b82;border-radius:4px"></div>
<div class="a" style="left:1623px;top:669px;width:20px;height:20px;background:#37353e;border:2px solid #7d7b82;border-radius:4px"></div>
<svg class="a" style="left:1623px;top:669px" width="20" height="20" viewBox="0 0 20 20"><path d="M4.2 10 L7.6 13.4 L15.6 5.4" stroke="#a21cf0" stroke-width="1.8" fill="none"/></svg>
<div class="a" style="left:299px;top:693px;width:1590px;height:1px;background:#615f67;"></div>
<div class="a" style="left:314px;top:698px;width:20px;height:20px;background:#37353e;border:2px solid #adabb1;border-radius:4px"></div>
<div class="t" style="left:356.2px;top:701.15px;font-size:14px;color:#e8e7ea;letter-spacing:0.116px;">HarrietMante</div>
<div class="a" style="left:1110px;top:698px;width:20px;height:20px;background:#37353e;border:2px solid #7d7b82;border-radius:4px"></div>
<div class="a" style="left:1623px;top:698px;width:20px;height:20px;background:#37353e;border:2px solid #7d7b82;border-radius:4px"></div>
<svg class="a" style="left:1623px;top:698px" width="20" height="20" viewBox="0 0 20 20"><path d="M4.2 10 L7.6 13.4 L15.6 5.4" stroke="#a21cf0" stroke-width="1.8" fill="none"/></svg>
<div class="a" style="left:299px;top:722px;width:1590px;height:1px;background:#615f67;"></div>
<div class="a" style="left:314px;top:727px;width:20px;height:20px;background:#37353e;border:2px solid #adabb1;border-radius:4px"></div>
<div class="t" style="left:356.2px;top:730.15px;font-size:14px;color:#e8e7ea;letter-spacing:-0.32px;">HildaTremblay</div>
<div class="a" style="left:1110px;top:727px;width:20px;height:20px;background:#37353e;border:2px solid #7d7b82;border-radius:4px"></div>
<div class="a" style="left:1623px;top:727px;width:20px;height:20px;background:#37353e;border:2px solid #7d7b82;border-radius:4px"></div>
<svg class="a" style="left:1623px;top:727px" width="20" height="20" viewBox="0 0 20 20"><path d="M4.2 10 L7.6 13.4 L15.6 5.4" stroke="#a21cf0" stroke-width="1.8" fill="none"/></svg>
<div class="a" style="left:299px;top:751px;width:1590px;height:1px;background:#615f67;"></div>
<div class="a" style="left:314px;top:756px;width:20px;height:20px;background:#37353e;border:2px solid #adabb1;border-radius:4px"></div>
<div class="t" style="left:356.2px;top:759.15px;font-size:14px;color:#e8e7ea;letter-spacing:-0.319px;">JanBreitenberg</div>
<div class="a" style="left:1110px;top:756px;width:20px;height:20px;background:#37353e;border:2px solid #7d7b82;border-radius:4px"></div>
<div class="a" style="left:1623px;top:756px;width:20px;height:20px;background:#37353e;border:2px solid #7d7b82;border-radius:4px"></div>
<svg class="a" style="left:1623px;top:756px" width="20" height="20" viewBox="0 0 20 20"><path d="M4.2 10 L7.6 13.4 L15.6 5.4" stroke="#a21cf0" stroke-width="1.8" fill="none"/></svg>
<div class="a" style="left:299px;top:780px;width:1590px;height:1px;background:#615f67;"></div>
<div class="a" style="left:314px;top:785px;width:20px;height:20px;background:#37353e;border:2px solid #adabb1;border-radius:4px"></div>
<div class="t" style="left:356.2px;top:788.15px;font-size:14px;color:#e8e7ea;letter-spacing:-0.569px;">JessieHintz</div>
<div class="a" style="left:1110px;top:785px;width:20px;height:20px;background:#37353e;border:2px solid #7d7b82;border-radius:4px"></div>
<div class="a" style="left:1623px;top:785px;width:20px;height:20px;background:#37353e;border:2px solid #7d7b82;border-radius:4px"></div>
<svg class="a" style="left:1623px;top:785px" width="20" height="20" viewBox="0 0 20 20"><path d="M4.2 10 L7.6 13.4 L15.6 5.4" stroke="#a21cf0" stroke-width="1.8" fill="none"/></svg>
<div class="a" style="left:299px;top:809px;width:1590px;height:1px;background:#615f67;"></div>
<div class="a" style="left:314px;top:814px;width:20px;height:20px;background:#37353e;border:2px solid #adabb1;border-radius:4px"></div>
<div class="t" style="left:356.2px;top:817.15px;font-size:14px;color:#e8e7ea;letter-spacing:-0.432px;">JoyceWalter</div>
<div class="a" style="left:1110px;top:814px;width:20px;height:20px;background:#37353e;border:2px solid #7d7b82;border-radius:4px"></div>
<div class="a" style="left:1623px;top:814px;width:20px;height:20px;background:#37353e;border:2px solid #7d7b82;border-radius:4px"></div>
<svg class="a" style="left:1623px;top:814px" width="20" height="20" viewBox="0 0 20 20"><path d="M4.2 10 L7.6 13.4 L15.6 5.4" stroke="#a21cf0" stroke-width="1.8" fill="none"/></svg>
<div class="a" style="left:299px;top:838px;width:1590px;height:1px;background:#615f67;"></div>
<div class="a" style="left:314px;top:843px;width:20px;height:20px;background:#37353e;border:2px solid #adabb1;border-radius:4px"></div>
<div class="t" style="left:356.2px;top:846.15px;font-size:14px;color:#e8e7ea;letter-spacing:-0.296px;">KathleenTowne</div>
<div class="a" style="left:1110px;top:843px;width:20px;height:20px;background:#37353e;border:2px solid #7d7b82;border-radius:4px"></div>
<div class="a" style="left:1623px;top:843px;width:20px;height:20px;background:#37353e;border:2px solid #7d7b82;border-radius:4px"></div>
<svg class="a" style="left:1623px;top:843px" width="20" height="20" viewBox="0 0 20 20"><path d="M4.2 10 L7.6 13.4 L15.6 5.4" stroke="#a21cf0" stroke-width="1.8" fill="none"/></svg>
<div class="a" style="left:299px;top:867px;width:1590px;height:1px;background:#615f67;"></div>
<div class="a" style="left:314px;top:872px;width:20px;height:20px;background:#37353e;border:2px solid #adabb1;border-radius:4px"></div>
<div class="t" style="left:356.2px;top:875.15px;font-size:14px;color:#e8e7ea;letter-spacing:-0.366px;">LanceSchmitt</div>
<div class="a" style="left:1110px;top:872px;width:20px;height:20px;background:#37353e;border:2px solid #7d7b82;border-radius:4px"></div>
<div class="a" style="left:1623px;top:872px;width:20px;height:20px;background:#37353e;border:2px solid #7d7b82;border-radius:4px"></div>
<svg class="a" style="left:1623px;top:872px" width="20" height="20" viewBox="0 0 20 20"><path d="M4.2 10 L7.6 13.4 L15.6 5.4" stroke="#a21cf0" stroke-width="1.8" fill="none"/></svg>
<div class="a" style="left:299px;top:896px;width:1590px;height:1px;background:#615f67;"></div>
<div class="a" style="left:314px;top:901px;width:20px;height:20px;background:#37353e;border:2px solid #adabb1;border-radius:4px"></div>
<div class="t" style="left:356.2px;top:904.15px;font-size:14px;color:#e8e7ea;letter-spacing:-0.496px;">LulaKunze</div>
<div class="a" style="left:1110px;top:901px;width:20px;height:20px;background:#37353e;border:2px solid #7d7b82;border-radius:4px"></div>
<div class="a" style="left:1623px;top:901px;width:20px;height:20px;background:#37353e;border:2px solid #7d7b82;border-radius:4px"></div>
<svg class="a" style="left:1623px;top:901px" width="20" height="20" viewBox="0 0 20 20"><path d="M4.2 10 L7.6 13.4 L15.6 5.4" stroke="#a21cf0" stroke-width="1.8" fill="none"/></svg>
<div class="a" style="left:299px;top:925px;width:1590px;height:1px;background:#615f67;"></div>
<div class="a" style="left:314px;top:930px;width:20px;height:20px;background:#37353e;border:2px solid #adabb1;border-radius:4px"></div>
<div class="t" style="left:356.2px;top:933.15px;font-size:14px;color:#e8e7ea;letter-spacing:0.006px;">MartaWintheiser</div>
<div class="a" style="left:1110px;top:930px;width:20px;height:20px;background:#37353e;border:2px solid #7d7b82;border-radius:4px"></div>
<div class="a" style="left:1623px;top:930px;width:20px;height:20px;background:#37353e;border:2px solid #7d7b82;border-radius:4px"></div>
<svg class="a" style="left:1623px;top:930px" width="20" height="20" viewBox="0 0 20 20"><path d="M4.2 10 L7.6 13.4 L15.6 5.4" stroke="#a21cf0" stroke-width="1.8" fill="none"/></svg>
<div class="a" style="left:299px;top:954px;width:1590px;height:1px;background:#615f67;"></div>
<div class="a" style="left:314px;top:959px;width:20px;height:20px;background:#37353e;border:2px solid #adabb1;border-radius:4px"></div>
<div class="t" style="left:356.2px;top:962.15px;font-size:14px;color:#e8e7ea;letter-spacing:-0.388px;">MelissaDavis</div>
<div class="a" style="left:1110px;top:959px;width:20px;height:20px;background:#37353e;border:2px solid #7d7b82;border-radius:4px"></div>
<div class="a" style="left:1623px;top:959px;width:20px;height:20px;background:#37353e;border:2px solid #7d7b82;border-radius:4px"></div>
<svg class="a" style="left:1623px;top:959px" width="20" height="20" viewBox="0 0 20 20"><path d="M4.2 10 L7.6 13.4 L15.6 5.4" stroke="#a21cf0" stroke-width="1.8" fill="none"/></svg>
</body></html>
